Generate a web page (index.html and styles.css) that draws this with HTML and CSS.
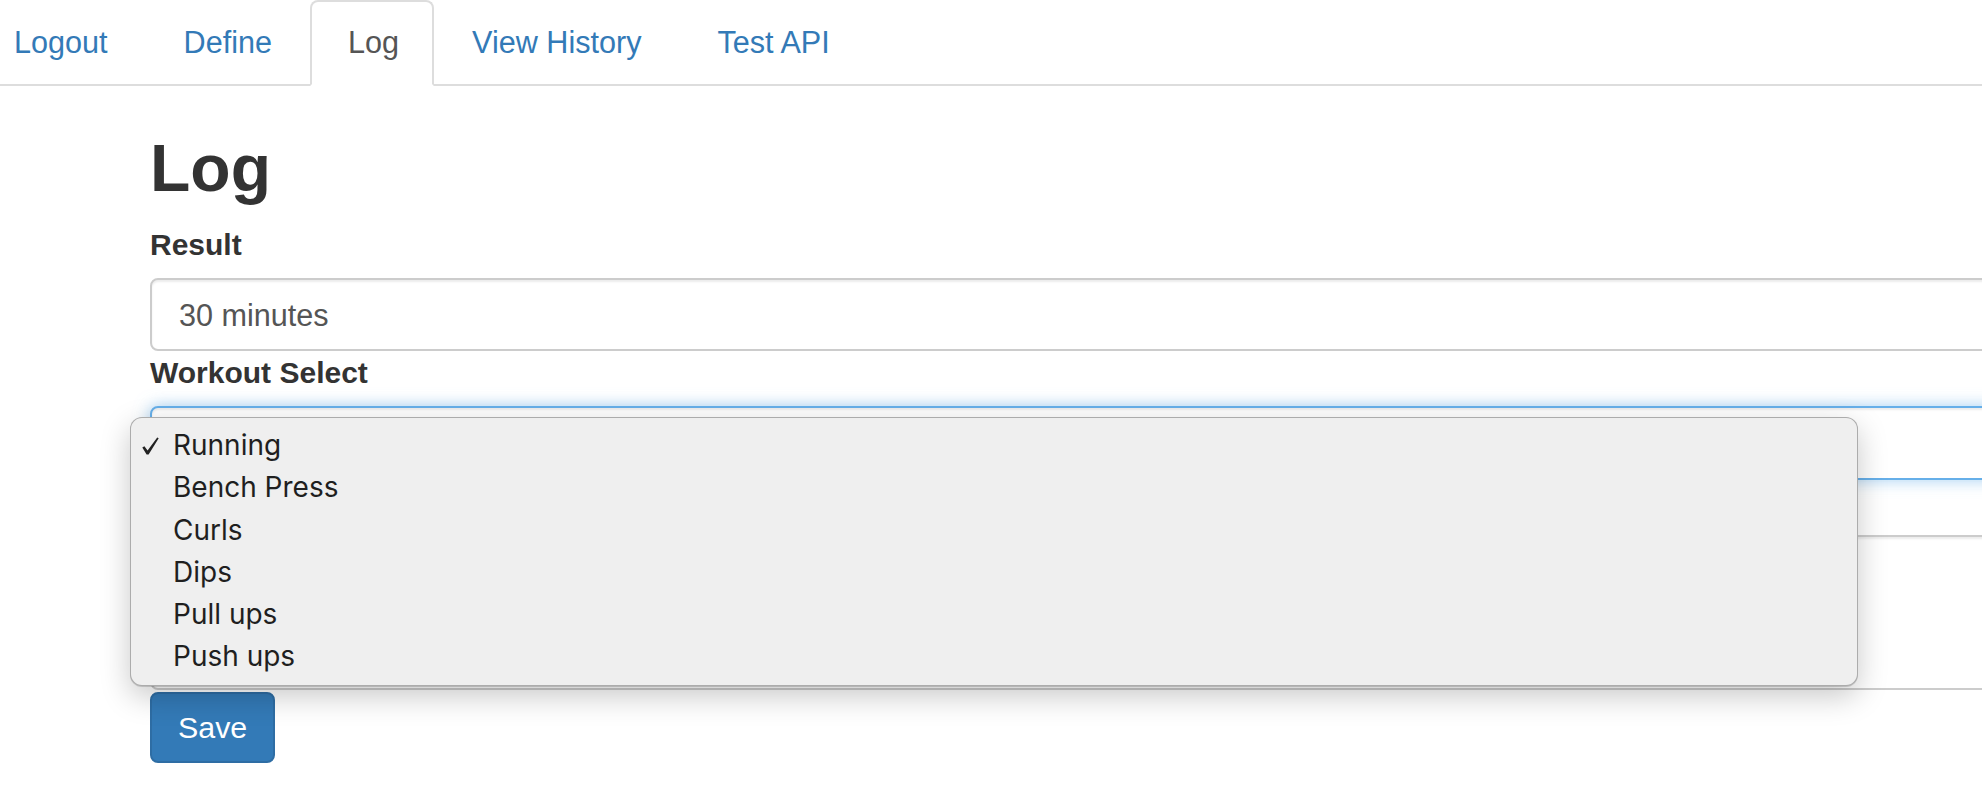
FILE: index.html
```html
<!DOCTYPE html>
<html lang="en">
<head>
<meta charset="utf-8">
<title>Log</title>
<link rel="stylesheet" href="styles.css">
</head>
<body>
<nav class="tabs">
  <ul class="tab-list">
    <li class="tab"><a class="tab-link" href="#">Logout</a></li>
    <li class="tab"><a class="tab-link" href="#">Define</a></li>
    <li class="tab"><a class="tab-link active" href="#">Log</a></li>
    <li class="tab"><a class="tab-link" href="#">View History</a></li>
    <li class="tab"><a class="tab-link" href="#">Test API</a></li>
  </ul>
</nav>
<main class="container">
  <h1 class="title">Log</h1>
  <form class="form">
    <label class="label">Result</label>
    <input class="control" type="text" value="30 minutes">
    <label class="label">Workout Select</label>
    <div class="control select-box"></div>
    <label class="label">&nbsp;</label>
    <div class="control area"></div>
    <div class="actions"><button class="btn" type="button">Save</button></div>
  </form>
  <div class="popup">
    <div class="option"><span class="check"><svg class="check-icon" viewBox="0 0 17 18" width="17" height="18"><path d="M0.3 10.6 L2.4 9.2 L5.6 13.6 L15.2 0.4 L16.7 1.3 L6.6 17.6 L4.6 17.6 Z" fill="#222"/></svg></span><span class="opt-text">Running</span></div>
    <div class="option"><span class="check"></span><span class="opt-text">Bench Press</span></div>
    <div class="option"><span class="check"></span><span class="opt-text">Curls</span></div>
    <div class="option"><span class="check"></span><span class="opt-text">Dips</span></div>
    <div class="option"><span class="check"></span><span class="opt-text">Pull ups</span></div>
    <div class="option"><span class="check"></span><span class="opt-text">Push ups</span></div>
  </div>
</main>
</body>
</html>
```

FILE: styles.css
```css
html, body {
  margin: 0;
  padding: 0;
  overflow: hidden;
  background: #fff;
}
body {
  font-family: "Liberation Sans", Arial, sans-serif;
  color: #333;
  width: 1982px;
  height: 806px;
  position: relative;
}
.tabs {
  border-bottom: 2px solid #ddd;
  height: 84px;
}
.tab-list {
  list-style: none;
  margin: 0 0 0 -24px;
  padding: 0;
  display: flex;
}
.tab-link {
  display: block;
  font-size: 30.6px;
  line-height: 40px;
  padding: 20px 36px 22px;
  border: 2px solid transparent;
  border-radius: 8px 8px 0 0;
  color: #337ab7;
  text-decoration: none;
  margin-bottom: -2px;
  height: 40px;
}
.tab-link.active {
  color: #555;
  background: #fff;
  border-color: #ddd #ddd #fff;
  padding-right: 33px;
}
.container {
  padding-left: 150px;
}
.title {
  font-size: 66px;
  line-height: 72px;
  font-weight: bold;
  margin: 46px 0 20px;
  color: #333;
}
.form {
  display: flex;
  flex-direction: column;
  align-items: flex-start;
  width: 1900px;
}
.label {
  display: block;
  font-size: 30px;
  font-weight: bold;
  line-height: 42px;
  margin-bottom: 12px;
  color: #333;
}
.control {
  box-sizing: border-box;
  width: 1900px;
  height: 73px;
  border: 2px solid #ccc;
  border-radius: 8px;
  margin: 0 0 1px;
  padding: 2px 27px 0;
  font-family: "Liberation Sans", Arial, sans-serif;
  font-size: 30.6px;
  color: #555;
  background: #fff;
  box-shadow: inset 0 2px 2px rgba(0, 0, 0, 0.075);
  outline: none;
}
.select-box {
  height: 74px;
  border-color: #66afe9;
  box-shadow: inset 0 2px 2px rgba(0, 0, 0, 0.075), 0 0 16px rgba(102, 175, 233, 0.6);
}
.area {
  height: 155px;
}
.actions {
  margin-top: 1px;
}
.btn {
  box-sizing: border-box;
  height: 71px;
  padding: 0 26px;
  font-family: "Liberation Sans", Arial, sans-serif;
  font-size: 30.4px;
  color: #fff;
  background: #337ab7;
  border: 2px solid #2e6da4;
  border-radius: 8px;
}
.popup {
  position: absolute;
  left: 130px;
  top: 417px;
  width: 1728px;
  height: 269px;
  box-sizing: border-box;
  padding-top: 6px;
  background: #efefef;
  border: 1px solid rgba(0, 0, 0, 0.28);
  border-radius: 12px;
  box-shadow: 0 1px 0 rgba(0, 0, 0, 0.15), 0 10px 30px rgba(0, 0, 0, 0.22);
  font-family: Inter, "Liberation Sans", sans-serif;
  font-size: 28px;
  color: #1f1f1f;
}
.option {
  display: flex;
  align-items: center;
  height: 42.3px;
  line-height: 42.3px;
  padding-left: 11px;
}
.check {
  width: 31px;
  height: 42.3px;
  display: flex;
  align-items: center;
}
.check-icon {
  display: block;
  margin-top: 2px;
}
```
